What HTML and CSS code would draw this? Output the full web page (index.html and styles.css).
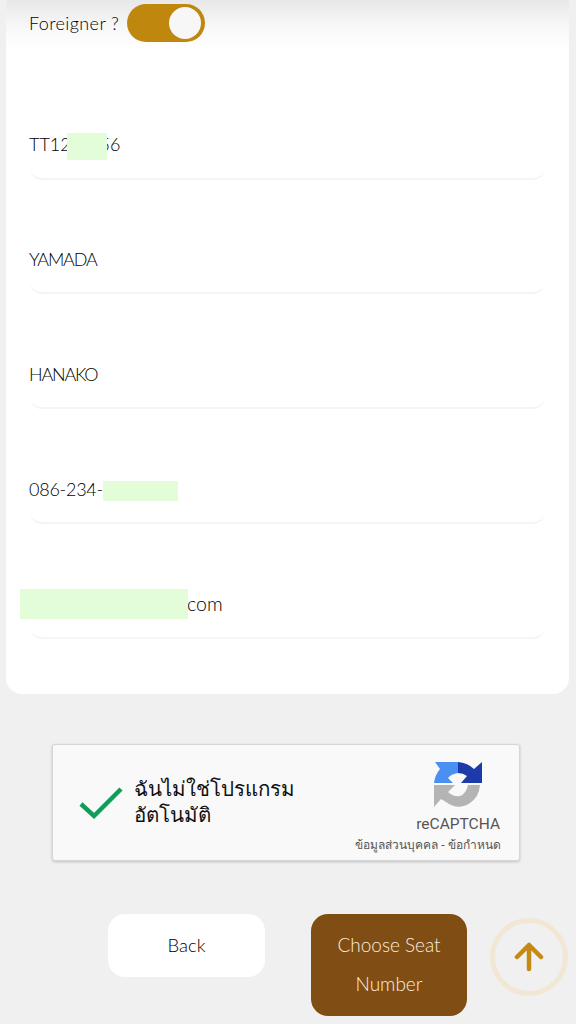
FILE: index.html
```html
<!DOCTYPE html>
<html lang="en">
<head>
    <meta charset="UTF-8">
    <meta name="viewport" content="width=device-width, initial-scale=1.0">
    <title>Passenger</title>
    <link rel="stylesheet" href="styles.css">
</head>
<body>
    <div class="card">
        <div class="fade"></div>
        <div class="foreigner">
            <span>Foreigner ?</span>
            <div class="toggle"><div class="knob"></div></div>
        </div>
        <div class="field first">TT12<i class="hide hide-id"></i><span class="tail">3456</span></div>
        <div class="field caps">YAMADA</div>
        <div class="field caps">HANAKO</div>
        <div class="field tel">086-234-<i class="hide hide-tel"></i></div>
        <div class="field mail"><i class="hide hide-mail"></i>com</div>
    </div>

    <div class="captcha">
        <svg class="check" viewBox="0 0 44 34" width="44" height="34">
            <path d="M2 18 L15 30 L42 3" fill="none" stroke="#0f9d58" stroke-width="4.5"/>
        </svg>
        <div class="captcha-text">ฉันไม่ใช่โปรแกรม<br>อัตโนมัติ</div>
        <div class="captcha-brand">
            <svg class="logo" viewBox="0 0 48 48" width="48" height="48">
                <path d="M0 22 Q1 14 6 8 L1 1 L24 1 L24 12 Q17 13 14 17 L19 22 Z" fill="#4a90f2"/>
                <path d="M24 1 Q34 2 40 8 L48 1 L48 22 L27 22 L33 15 Q29 12 24 12 Z" fill="#1c3aa9"/>
                <path d="M0 24 L21 24 L14 31 Q19 36 26 35 Q32 33 34 24 L46 24 Q45 36 36 42 Q24 50 12 41 L7 38 L0 46 Z" fill="#b4b4b4"/>
            </svg>
            <div class="brand-name">reCAPTCHA</div>
            <div class="brand-links">ข้อมูลส่วนบุคคล - ข้อกำหนด</div>
        </div>
    </div>

    <div class="actions">
        <button class="btn btn-back">Back</button>
        <button class="btn btn-next">Choose Seat Number</button>
        <div class="to-top">
            <svg viewBox="0 0 30 30" width="30" height="30">
                <path d="M15 27 L15 3 M3 15 L15 3 L27 15" fill="none" stroke="#c48a14" stroke-width="4.5" stroke-linecap="round" stroke-linejoin="round"/>
            </svg>
        </div>
    </div>
</body>
</html>
```

FILE: styles.css
```css
*{margin:0;padding:0;box-sizing:border-box;}
html,body{height:1024px;overflow:hidden;}
body{
    background-color:#f0f0f0;
    font-family:Lato,"Noto Sans","DejaVu Sans",sans-serif;
    font-weight:300;color:#000;
}
/* form card */
.card{
    position:relative;
    margin:0 7px 0 6px;height:694px;
    padding:0 24px;
    background-color:#fff;
    border-radius:0 0 16px 16px;
    text-indent:-1px;
}
.fade{
    position:absolute;top:0;left:0;right:0;height:50px;
    background:linear-gradient(#e8e8e8,#f8f8f8 55%,#fff);
}
.foreigner{
    position:relative;
    display:flex;align-items:center;gap:8px;
    height:45px;
    font-size:18px;letter-spacing:.4px;
}
.toggle{
    width:78px;height:38px;border-radius:19px;
    background-color:#c0870f;
    display:flex;justify-content:flex-end;align-items:center;
    padding-right:4px;
}
.knob{width:32px;height:32px;border-radius:50%;background-color:#f7f7f7;}
.field{
    position:relative;
    display:flex;align-items:center;
    height:114.75px;padding-top:47px;
    font-size:18px;
    border-bottom:2px solid #f5f5f5;
    border-radius:0 0 12px 12px;
}
.first{height:134.5px;padding-top:64.5px;}
.tail{margin-left:9px;}
.caps{letter-spacing:-1.2px;}
.tel{letter-spacing:-.25px;}
/* green patches hiding personal data */
.hide{position:absolute;background-color:#e3fdd8;}
.hide-id{left:37px;top:88px;width:40px;height:27px;}
.hide-tel{left:73px;top:72px;width:75px;height:20px;}
.hide-mail{left:-10px;top:65px;width:168px;height:30px;}
.mail{padding-left:157px;font-size:19.5px;text-indent:0;}
/* recaptcha */
.captcha{
    display:flex;align-items:center;
    width:468px;height:117px;
    margin:50px 0 0 52px;
    background-color:#f9f9f9;
    border:1px solid #d6d6d6;border-radius:3px;
    box-shadow:0 1px 3px rgba(0,0,0,.2);
    position:relative;
}
.check{margin:0 11px 0 26px;}
.captcha-text{
    font-family:"Noto Sans","DejaVu Sans",sans-serif;
    font-weight:400;font-size:20.5px;line-height:26px;color:#111;
    padding-bottom:3px;
}
.captcha-brand{
    position:absolute;right:18px;top:16px;
    display:flex;flex-direction:column;align-items:flex-end;
}
.logo{margin-right:19px;}
.brand-name{
    font-family:Roboto,sans-serif;font-weight:400;
    font-size:15.5px;color:#555;margin-top:6px;margin-right:1px;
}
.brand-links{
    font-family:"Noto Sans","DejaVu Sans",sans-serif;font-weight:400;
    font-size:12px;color:#555;margin-top:2px;white-space:nowrap;
}
/* bottom buttons */
.actions{
    display:flex;align-items:flex-start;
    margin:53px 0 0 108px;
}
.btn{
    width:157px;border:none;border-radius:17px;
    font-family:Lato,sans-serif;font-weight:300;font-size:18.5px;
}
.btn-back{height:63px;padding-bottom:2px;background-color:#fff;color:#000;}
.btn-next{
    width:156px;height:102px;margin-left:46px;padding:0 15px 2px;
    font-size:19px;
    background-color:#804d14;color:#fbeede;line-height:39px;
}
.to-top{
    width:78px;height:78px;margin:4px 0 0 23px;
    border:5px solid #f2e7d4;border-radius:50%;
    display:flex;align-items:center;justify-content:center;
}
```
